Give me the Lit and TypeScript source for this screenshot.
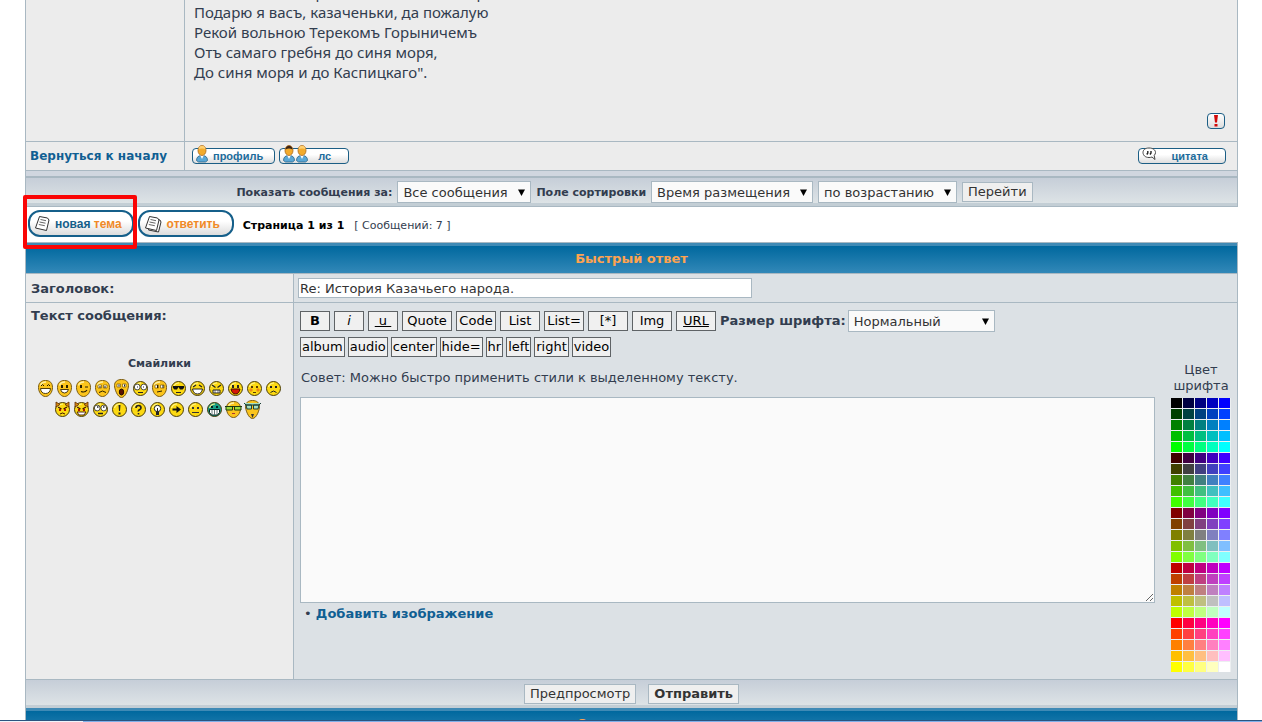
import { LitElement, html, svg, css } from "lit";
import { customElement, property } from "lit/decorators.js";
import { classMap } from "lit/directives/class-map.js";
import { styleMap } from "lit/directives/style-map.js";

const LEVELS = [0, 64, 128, 191, 255];

type Shape = "tall" | "round" | "long";
interface Smiley {
  name: string;
  shape: Shape;
  fill?: string;
  face: unknown;
}

const eyes = svg`<path d="M4 5h2v3h-2zM9 5h2v3h-2z" fill="#2a2000"/>`;
const bigEyes = svg`<circle cx="4.2" cy="6" r="2.900" fill="#fff" stroke="#222" stroke-width=".8"/><circle cx="10.8" cy="6" r="2.900" fill="#fff" stroke="#222" stroke-width=".8"/>`;
const squareEyes = svg`<path d="M3 5h3.500v3H3zM8.500 5H12v3H8.500z" fill="#fff" stroke="#7a5a00" stroke-width=".7"/>`;
const angry = svg`<path d="M3 5l3.500 2M12 5l-3.500 2" stroke="#3a1500" stroke-width="1.300"/><path d="M4 7h2v2h-2zM9 7h2v2h-2z" fill="#b01500"/>`;
const horns = svg`<path d="M1 5V0l4 2.500zM14 5V0l-4 2.500z" fill="#d88a10" stroke="#5a2a00" stroke-width=".8"/>`;

const SMILEYS: Smiley[][] = [
  [
    { name: "Очень доволен", shape: "tall", face: svg`<path d="M3 6l1.500-1.500L6 6M9 6l1.500-1.500L12 6" fill="none" stroke="#2a2000"/><path d="M2.500 8.500h10q-.5 5-5 5t-5-5z" fill="#fff" stroke="#3a2a00" stroke-width=".9"/>` },
    { name: "Улыбается", shape: "tall", face: svg`${eyes}<path d="M3.500 9.500h8q-1 3.500-4 3.500t-4-3.500z" fill="#fff" stroke="#3a2a00" stroke-width=".9"/>` },
    { name: "Подмигивает", shape: "tall", face: svg`<path d="M4 5h2v3h-2z" fill="#2a2000"/><path d="M9 7h3M5 11.500q4 1.500 6-1.500" fill="none" stroke="#2a2000" stroke-width="1.100"/>` },
    { name: "Грустный", shape: "tall", face: svg`${squareEyes}<path d="M4 7h2M9 7h2M4 12.500q3.500-3 7 0" fill="none" stroke="#2a2000"/>` },
    { name: "Удивлён", shape: "long", face: svg`${squareEyes}<path d="M5 5.500v2M10.500 5.500v2" stroke="#222"/><ellipse cx="7.500" cy="13" rx="2.200" ry="3" fill="#5a1000" stroke="#221000"/>` },
    { name: "В шоке", shape: "round", face: svg`${bigEyes}<path d="M4 6h1M10 6h1M5 11.500h5" stroke="#222"/>` },
    { name: "В замешательстве", shape: "tall", face: svg`${squareEyes}<path d="M5.500 5v3M11 5v3M5 12l5-1" stroke="#2a2000"/>` },
    { name: "Всё в порядке", shape: "round", face: svg`<path d="M2 5h11v2l-1.500 1.500H9L7.500 6 6 8.500H3.500L2 7z" fill="#111"/><path d="M5 11.500h5" stroke="#222"/>` },
    { name: "Смеётся", shape: "round", face: svg`<path d="M3 6l3-2M12 6L9 4" stroke="#222" stroke-width="1.300"/><path d="M2.500 8h10q-1 5-5 5t-5-5z" fill="#fff" stroke="#222"/>` },
    { name: "Злой", shape: "round", face: svg`<path d="M3 4l3.500 2.500M12 4L8.500 6.500" stroke="#222" stroke-width="1.300"/><path d="M4 9h7v3H4z" fill="#fff" stroke="#222"/><path d="M6 9v3M9 9v3" stroke="#222" stroke-width=".6"/>` },
    { name: "Дразнится", shape: "round", face: svg`<path d="M4 4h2v3H4zM9 4h2v3H9z" fill="#222"/><path d="M3 8h9q-1 5-4.500 5T3 8z" fill="#d71808" stroke="#421000"/>` },
    { name: "Смущён", shape: "round", face: svg`<path d="M4 5h2v2H4zM9 5h2v2H9zM6 11h3v1H6z" fill="#5a3a00"/><circle cx="4" cy="9" r="1.700" fill="#ef8b15"/><circle cx="11" cy="9" r="1.700" fill="#ef8b15"/>` },
    { name: "Плачет", shape: "round", face: svg`<path d="M4 5h2v2H4zM9 5h2v2H9z" fill="#222"/><path d="M4.500 11.500q3-3 6 0" fill="none" stroke="#222"/>` },
  ],
  [
    { name: "Злой чёрт", shape: "round", face: svg`${horns}${angry}<path d="M5 12q2.500-2 5 0" fill="none" stroke="#3a1500"/>` },
    { name: "Весёлый чёрт", shape: "round", face: svg`${horns}${angry}<path d="M3 10h9l-2 3H5z" fill="#fff" stroke="#3a1500" stroke-width=".9"/>` },
    { name: "Закатывает глаза", shape: "round", face: svg`${bigEyes}<path d="M4 5h1.500M10 5h1.500M5 11.500h5" stroke="#222" stroke-width="1.300"/>` },
    { name: "Восклицание", shape: "round", face: svg`<path d="M6.500 3h2l-.5 6h-1zM6.500 10.500h2v2h-2z" fill="#222"/>` },
    { name: "Вопрос", shape: "round", face: svg`<path d="M5 6q0-2.500 2.500-2.500T10 6q0 1-1.500 1.800T7.500 9.500M7.500 11v1.500" fill="none" stroke="#222" stroke-width="1.600"/>` },
    { name: "Идея", shape: "round", face: svg`<circle cx="7.500" cy="6.500" r="3.200" fill="#fff" stroke="#222"/><path d="M7.500 6v4" stroke="#222"/><path d="M6 9.500h3v3.500H6z" fill="#222"/>` },
    { name: "Стрелка", shape: "round", face: svg`<path d="M3.500 6.500h4V4l4.500 3.500L7.500 11V8.500h-4z" fill="#111"/>` },
    { name: "Нейтральный", shape: "round", face: svg`<path d="M4 5h2v2H4zM9 5h2v2H9zM4 10h7v1H4z" fill="#333"/>` },
    { name: "Зелёный", shape: "round", fill: "#16a085", face: svg`<path d="M4 4h2v2H4zM9 4h2v2H9z" fill="#022"/><path d="M2.500 7.500h10v3l-2 2.500h-6l-2-2.500z" fill="#fff" stroke="#022"/><path d="M5 8v4.500M7.500 8v4.500M10 8v4.500" stroke="#022" stroke-width=".6"/>` },
    { name: "Гик", shape: "tall", face: svg`<path d="M-1 5.500h17M0 5.500h6.500V9H0zM8.500 5.500H15V9H8.500z" fill="#9ddc3c" stroke="#1d3a10"/><path d="M6 12.500h3" stroke="#a33"/>` },
    { name: "Супер гик", shape: "long", face: svg`<path d="M-1 3l2 2h13l2-2M1 5h5.500v4H2zM8.500 5H14l-1 4H8.500z" fill="#a6dfc0" stroke="#1c3f36"/><path d="M6 14h3l-1.500 4z" fill="#333"/>` },
  ],
];

@customElement("smiley-icon")
export class SmileyIcon extends LitElement {
  @property({ attribute: false }) smiley!: Smiley;

  static styles = css`
    :host { display: block; width: 15px; height: 19px; }
    .icon { display: block; overflow: visible; }
  `;

  render() {
    const { shape, fill, face } = this.smiley;
    const outline =
      shape === "round"
        ? svg`<circle cx="7.500" cy="7.500" r="7" fill=${fill ?? "#fcd912"} stroke="#4a3c08"/><path d="M2.500 6Q4 2 8 2" fill="none" stroke="#fff58a" stroke-width="1.200"/>`
        : shape === "tall"
          ? svg`<path d="M7.500.5C12 .5 14.500 3 14.500 7.500S11.500 16.500 7.500 16.500.5 12 .5 7.500 3 .5 7.500.5z" fill="#fbc41c" stroke="#7a5c14"/><path d="M2.500 5.500Q3.500 2 8 2" fill="none" stroke="#fff0a0" stroke-width="1.300"/>`
          : svg`<path d="M7.500.5C12 .5 14.500 3 14.500 6.500S11.500 18.500 7.500 18.500.5 10 .5 6.500 3 .5 7.500.5z" fill="#fbc41c" stroke="#7a5c14"/>`;
    const box = shape === "round" ? "0 -2 15 19" : shape === "tall" ? "0 -1 15 19" : "0 0 15 19";
    return html`<svg class="icon" width="15" height="19" viewBox=${box} aria-hidden="true">${outline}${face}</svg>`;
  }
}

@customElement("drop-down")
export class DropDown extends LitElement {
  @property() label = "";
  @property({ type: Boolean }) small = false;
  @property({ type: Boolean }) wide = false;
  @property({ attribute: false }) options: string[] = [];

  static styles = css`
    :host { display: block; }
    .field { display: flex; align-items: center; gap: 5px; }
    .field.wide { gap: 2px; }
    .caption { color: #323d4f; font: bold 13px/20px Verdana, "DejaVu Sans", sans-serif; white-space: nowrap; }
    .caption.small { padding-top: 2px; font-size: 11px; }
    .box { display: grid; align-items: center; }
    .control {
      grid-area: 1 / 1; appearance: none; box-sizing: border-box; height: 22px; margin: 0;
      padding: 0 22px 0 5px; border: 1px solid #a9b8c2; border-radius: 0;
      background: #fafafa; color: #333; font: 13px Verdana, "DejaVu Sans", sans-serif;
    }
    .control.wide { width: 147px; }
    .arrow { grid-area: 1 / 1; justify-self: end; margin-right: 6px; pointer-events: none; }
  `;

  render() {
    return html`<div class=${classMap({ field: true, wide: this.wide })}>
      ${this.label ? html`<label class=${classMap({ caption: true, small: this.small })} for="control">${this.label}</label>` : ""}
      <span class="box">
        <select id="control" class=${classMap({ control: true, wide: this.wide })} aria-label=${this.label || "Порядок"}>
          ${this.options.map((o) => html`<option>${o}</option>`)}
        </select>
        <svg class="arrow" width="7" height="7" viewBox="0 0 7 7" aria-hidden="true"><path d="M0 .5h7L3.500 7z" fill="#000" /></svg>
      </span>
    </div>`;
  }
}

const person = (hair: string, x: number) => svg`<g transform="translate(${x} 0)">
  <path d="M.5 15.500q0-5 5.500-5t5.500 5l-2 1.500h-7z" fill="#5aa7d6" stroke="#2c6387" stroke-width=".8"/>
  <path d="M4 10l2 4 2-4z" fill="#fff"/>
  <ellipse cx="6" cy="5.500" rx="4" ry="5" fill="#f3ab2c" stroke="#a8661a" stroke-width=".8"/>
  <path d="M2.500 4.500Q3 .8 6 .8T9.500 4.500Q6 2.500 2.500 4.500z" fill=${hair}/>
</g>`;

const page = svg`<path d="M5.500 1.500l8 1.500 1.500 2-2.500 10.500-11-2.500z" fill="#fff" stroke="#333"/><path d="M6.500 4.500l5.500 1.200M5.500 7l6 1.200M4.800 9.500l6 1.200" stroke="#555" stroke-width=".9"/>`;

@customElement("app-root")
export class AppRoot extends LitElement {
  static styles = css`
    :host {
      display: block; position: relative; box-sizing: border-box; height: 100vh; overflow: hidden;
      padding: 0 24px 0 25px; background: #fff; color: #323d4f;
      font: 13px/16px Verdana, "DejaVu Sans", sans-serif;
    }
    button { margin: 0; cursor: pointer; font: inherit; }
    a { color: #105f93; text-decoration: none; font-weight: bold; }

    .post { border: 1px solid #a9b8c2; border-top: 0; background: #ececec; }
    .row { display: grid; grid-template-columns: 158px 1fr; border-bottom: 1px solid #a9b8c2; }
    .row > * + * { border-left: 1px solid #a9b8c2; }
    .body { display: flex; flex-direction: column; justify-content: flex-end; height: 141px; overflow: hidden; }
    .poem { margin: 0; padding: 0 9px; font: 15px/20px "Trebuchet MS", "Noto Sans", sans-serif; white-space: pre-line; }
    .report { display: flex; justify-content: flex-end; padding: 31px 12px 12px; }
    .warn { display: grid; place-items: center; width: 18px; height: 16px; padding: 0; border: 1px solid #1b5e85; border-radius: 4px; background: linear-gradient(#fff, #ddd); }
    .foot { display: flex; align-items: center; height: 28px; box-sizing: border-box; padding: 0 11px 0 7px; gap: 4px; }
    .foot.top { padding: 0 4px; font-size: 12px; white-space: nowrap; }
    .push { margin-left: auto; }
    .tag {
      display: flex; align-items: center; height: 16px; box-sizing: border-box; padding: 0 11px 0 3px; gap: 5px;
      border: 1px solid #1b5e85; border-radius: 4px; background: linear-gradient(#fff 40%, #dedede);
      color: #1d6c9c; font: bold 11px/14px "Liberation Sans", Arial, sans-serif;
    }
    .tag svg { margin-top: -4px; overflow: visible; }
    .tag.pm { padding-right: 17px; gap: 10px; }
    .tag.quote { padding-right: 17px; gap: 14px; }
    .gap { height: 5px; border-bottom: 2px solid #a9b8c2; background: #d0d6df; }
    .filters {
      display: flex; justify-content: center; align-items: center; gap: 5px; height: 28px; box-sizing: border-box; padding: 3px 0 0 6px;
      border-bottom: 3px solid #c3ced5; background: linear-gradient(#c6ced8, #dde3e6);
    }
    .plain {
      height: 20px; padding: 0 5px; border: 1px solid #a9b8c2; background: #efefef; color: #333; line-height: 18px;
    }
    .strong { font-weight: bold; }

    .actions { display: flex; align-items: center; height: 33px; padding: 0 3px 2px; }
    .pill {
      display: flex; align-items: center; gap: 5px; height: 27px; box-sizing: border-box; padding: 0 10px 0 4px;
      border: 2px solid #155f8a; border-radius: 12px; background: linear-gradient(#fff 40%, #dcdcdc);
      color: #f08a28; font: bold 12px/16px "Liberation Sans", Arial, sans-serif; margin-right: 4px;
    }
    .pill b { color: #155f8a; }
    .pill.reply { padding-right: 12px; margin-right: 9px; }
    .pages { color: #000; font-size: 11px; font-weight: bold; margin: 4px 10px 0 0; }
    .count { font-size: 11px; margin-top: 4px; }

    .form { border: 1px solid #a9b8c2; border-bottom: 0; }
    .head {
      height: 27px; margin: 0; border-top: 3px solid #3f8ab5; border-bottom: 1px solid #a9b8c2;
      background: linear-gradient(#00689e, #3288b8); color: #ffa34f; font-size: 13px; line-height: 25px; text-align: center;
    }
    .entry { display: grid; grid-template-columns: 267px 1fr; border-bottom: 1px solid #a9b8c2; }
    .name { padding: 5px 5px 3px; background: #ececec; font-weight: bold; line-height: 20px; }
    .value { border-left: 1px solid #a9b8c2; padding: 4px; background: #dce1e5; min-width: 0; }
    .name.message { padding-top: 3px; }
    .value.message { display: flex; padding: 7px 6px; gap: 16px; }
    .subject {
      display: block; width: 454px; height: 20px; box-sizing: border-box; margin: 0; padding: 0 1px;
      border: 1px solid #a9b8c2; background: #fff; color: #333; font: 13px Verdana, "DejaVu Sans", sans-serif;
    }
    .smileys { display: flex; flex-direction: column; align-items: center; margin-top: 28px; }
    .smileys h3 { margin: 0 0 4px; font-size: 11px; line-height: 20px; }
    .line { display: flex; gap: 4px; height: 21px; }
    .line + .line { padding-right: 4px; }
    .line button { border: 0; padding: 0; background: none; }
    .editor { flex: 1; min-width: 0; display: flex; flex-direction: column; }
    .tools { display: flex; align-items: center; gap: 4px; height: 22px; margin-bottom: 4px; }
    .tools.extra { gap: 3px; }
    .tool { height: 20px; padding: 0 1px; border: 1px solid #5f6366; background: #f0f0f0; color: #000; line-height: 18px; white-space: nowrap; }
    .tool.w30 { width: 30px; }
    .tool.w40 { width: 40px; }
    .tool.w50 { width: 50px; }
    .tool.italic { font-style: italic; }
    .tool.under { text-decoration: underline; white-space: pre; }
    .tip { margin: 6px 1px 9px; line-height: 20px; }
    .text { display: block; width: 100%; height: 206px; box-sizing: border-box; margin: 0; border: 1px solid #a9b8c2; background: #fafafa; font: inherit; }
    .attach { margin: 1px 4px; line-height: 20px; }
    .colors { width: 60px; padding-top: 52px; text-align: center; }
    .palette { display: grid; grid-template-columns: repeat(5, 11px); grid-auto-rows: 10px; gap: 1px; margin-top: 4px; background: #eceff1; }
    .swatch { border: 0; padding: 0; }
    .submit {
      display: flex; justify-content: center; align-items: center; gap: 12px; height: 28px; box-sizing: border-box; padding-top: 3px;
      border-bottom: 3px solid #c3ced5; background: linear-gradient(#c6ced8, #dde3e6);
    }
    .related { border-bottom: 0; }

    .marker { position: absolute; left: 23px; top: 195px; width: 106px; height: 46px; border: 4px solid #fa0505; border-radius: 2px; pointer-events: none; }
    .edge { position: absolute; left: 0; right: 0; bottom: 0; height: 1px; border-top: 1px solid #2b5480; background: linear-gradient(to right, #eef4fb 83px, #7fb0ea 83px); }
  `;

  private tool(text: string, cls = "") {
    return html`<button type="button" class="tool ${cls}">${text}</button>`;
  }

  render() {
    return html`
      <section class="post">
        <div class="row">
          <div></div>
          <div class="body">
            <p class="poem">Не плачьте вы, древни отцы мои, матери
Подарю я васъ, казаченьки, да пожалую
Рекой вольною Терекомъ Горыничемъ
Отъ самаго гребня до синя моря,
До синя моря и до Каспицкаго".</p>
            <div class="report">
              <button type="button" class="warn" aria-label="Пожаловаться">
                <svg width="6" height="12" viewBox="0 0 6 12"><path d="M1 0h4L4 7.500H2zM1.500 9h3v2.500h-3z" fill="#d10a0a" /></svg>
              </button>
            </div>
          </div>
        </div>
        <div class="row">
          <div class="foot top"><a href="#top">Вернуться к началу</a></div>
          <div class="foot">
            <a class="tag" href="#profile"><svg width="12" height="18" viewBox="0 0 12 18">${person("#ffd070", 0)}</svg>профиль</a>
            <a class="tag pm" href="#pm"><svg width="25" height="18" viewBox="0 0 25 18">${person("#3a2418", 0)}${person("#ffd070", 13)}</svg>лс</a>
            <a class="tag quote push" href="#quote"><svg width="15" height="14" viewBox="0 0 15 14"><path d="M7 1C3 1 1 3 1 5.500S3 10.500 7 10.500q1.500 0 3-.5l3 2.500-.8-4Q13.500 7 13.500 5.500C13.500 3 11 1 7 1z" fill="#fff" stroke="#444" /><path d="M5.800 4v2l-1 1.500M9 4v2L8 7.500" fill="none" stroke="#222" stroke-width="1.400" /></svg>цитата</a>
          </div>
        </div>
        <div class="gap"></div>
        <form class="filters">
          <drop-down small label="Показать сообщения за:" .options=${["Все сообщения"]}></drop-down>
          <drop-down small label="Поле сортировки" .options=${["Время размещения"]}></drop-down>
          <drop-down .options=${["по возрастанию"]}></drop-down>
          <button type="button" class="plain">Перейти</button>
        </form>
      </section>

      <nav class="actions">
        <a class="pill" href="#new"><svg width="16" height="17" viewBox="0 0 16 17">${page}</svg><span><b>новая</b> тема</span></a>
        <a class="pill reply" href="#reply"><svg width="18" height="18" viewBox="0 0 18 18"><path d="M8 3.500l8 1.500 1 2-2.500 10-10-2z" fill="#fff" stroke="#333" />${page}</svg>ответить</a>
        <span class="pages">Страница 1 из 1</span>
        <span class="count">[ Сообщений: 7 ]</span>
      </nav>

      <form class="form">
        <h2 class="head">Быстрый ответ</h2>
        <div class="entry">
          <label class="name" for="subject">Заголовок:</label>
          <div class="value"><input id="subject" class="subject" type="text" .value=${"Re: История Казачьего народа."} /></div>
        </div>
        <div class="entry">
          <div class="name message">
            <label for="message">Текст сообщения:</label>
            <div class="smileys">
              <h3>Смайлики</h3>
              ${SMILEYS.map((line) => html`<div class="line">${line.map((s) => html`<button type="button" aria-label=${s.name}><smiley-icon .smiley=${s}></smiley-icon></button>`)}</div>`)}
            </div>
          </div>
          <div class="value message">
            <div class="editor">
              <div class="tools">
                ${this.tool("B", "w30 strong")}${this.tool("i", "w30 italic")}${this.tool(" u ", "w30 under")}
                ${this.tool("Quote", "w50")}${this.tool("Code", "w40")}${this.tool("List", "w40")}${this.tool("List=", "w40")}
                ${this.tool("[*]", "w40")}${this.tool("Img", "w40")}${this.tool("URL", "w40 under")}
                <drop-down wide label="Размер шрифта:" .options=${["Нормальный"]}></drop-down>
              </div>
              <div class="tools extra">${["album", "audio", "center", "hide=", "hr", "left", "right", "video"].map((t) => this.tool(t))}</div>
              <p class="tip">Совет: Можно быстро применить стили к выделенному тексту.</p>
              <textarea id="message" class="text"></textarea>
              <div class="attach">• <a href="#image">Добавить изображение</a></div>
            </div>
            <div class="colors">
              Цвет шрифта
              <div class="palette">
                ${LEVELS.map((r) => LEVELS.map((g) => LEVELS.map((b) => html`<button type="button" class="swatch" aria-label="Цвет ${r}, ${g}, ${b}" style=${styleMap({ background: `rgb(${r},${g},${b})` })}></button>`)))}
              </div>
            </div>
          </div>
        </div>
        <div class="submit">
          <button type="button" class="plain">Предпросмотр</button>
          <button type="submit" class="plain strong">Отправить</button>
        </div>
        <h2 class="head related">Сходные темы</h2>
      </form>
      <div class="marker"></div>
      <div class="edge"></div>
    `;
  }
}
